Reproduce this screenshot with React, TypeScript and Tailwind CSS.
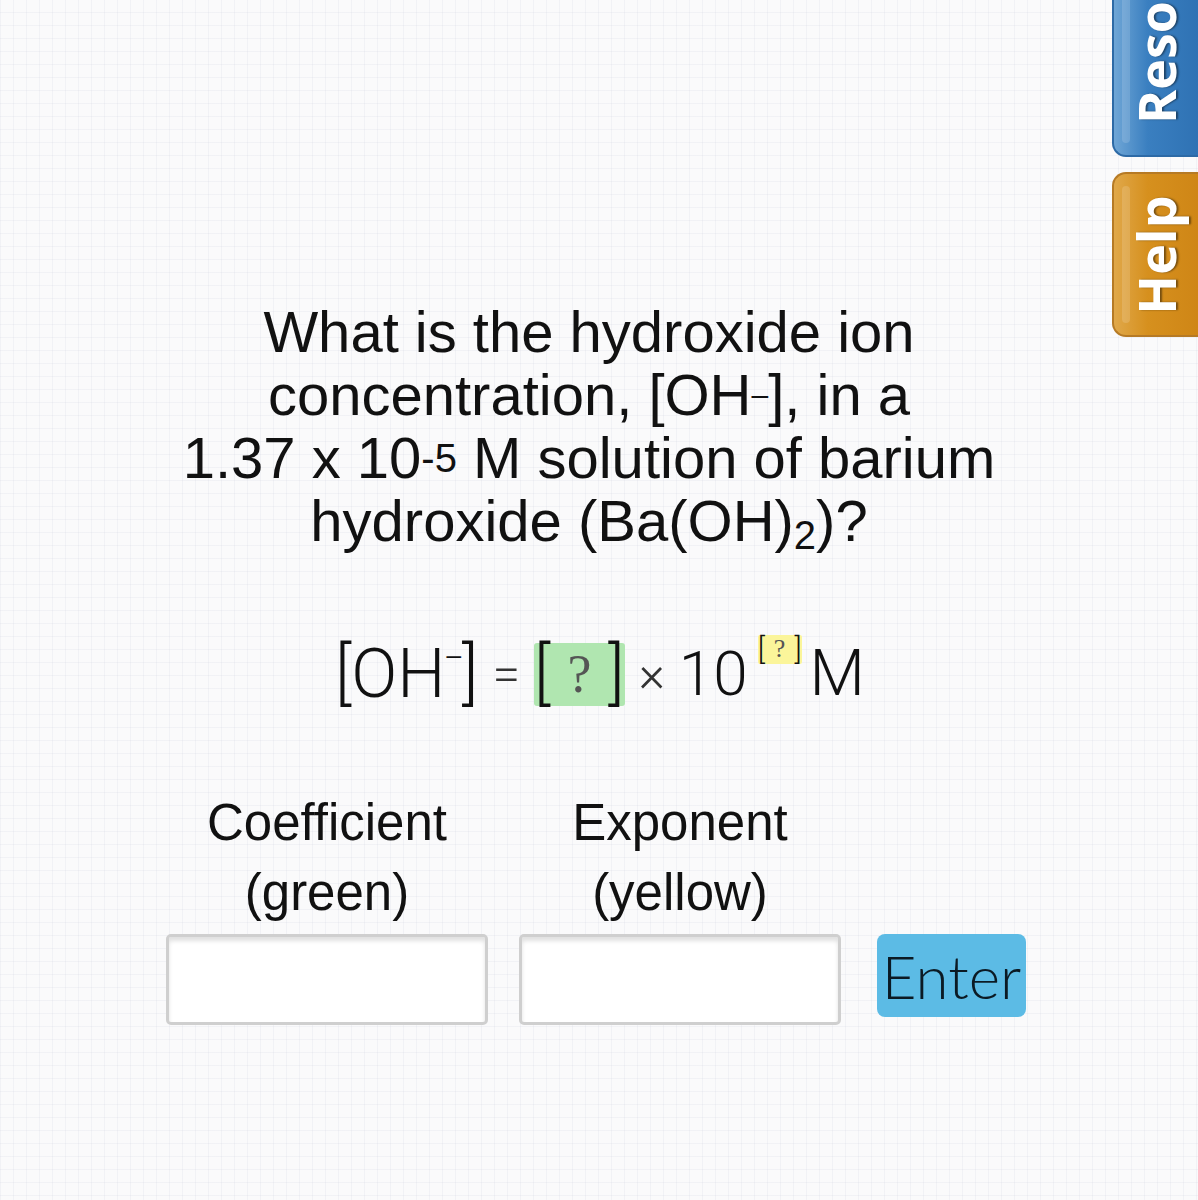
import React from 'react';

const sans = "font-['Liberation_Sans',Arial,sans-serif]";
const mathFont = "font-['Roboto',sans-serif] font-light";

function SideTab({ label, tone }: { label: string; tone: 'blue' | 'orange' }) {
  const colors =
    tone === 'blue'
      ? 'bg-[linear-gradient(90deg,#6fa6d6_0%,#3a7fc0_40%,#2f72b4_100%)] border-[#2d6aa6]'
      : 'bg-[linear-gradient(90deg,#e0a84a_0%,#d6901e_40%,#cf8616_100%)] border-[#b67a25]';
  return (
    <div className={`relative flex h-full w-full items-center justify-center overflow-hidden rounded-l-[14px] border-2 border-r-0 ${colors}`}>
      <span className="absolute inset-y-3 left-2 w-2 rounded-full bg-white/15" />
      <span className="-rotate-90 whitespace-nowrap font-['Open_Sans',sans-serif] text-[52px] font-bold text-white [text-shadow:0_2px_2px_rgba(0,0,0,0.45)]">
        {label}
      </span>
    </div>
  );
}

export default function App() {
  return (
    <div className="relative h-[1200px] w-full overflow-hidden bg-[#fafafb] bg-[linear-gradient(90deg,rgba(200,205,220,0.18)_1px,transparent_1px),linear-gradient(0deg,rgba(200,205,220,0.18)_1px,transparent_1px)] bg-[size:13px_13px]">
      {/* right-hand tabs */}
      <div className="absolute right-0 top-[-173px] h-[330px] w-[86px]">
        <SideTab label="Resources" tone="blue" />
      </div>
      <div className="absolute right-0 top-[172px] h-[165px] w-[86px]">
        <SideTab label="Help" tone="orange" />
      </div>

      <div className="ml-[166px] flex w-[860px] flex-col items-center pt-[300px]">
        <p className={`${sans} w-[860px] -ml-[14px] text-center text-[58px] leading-[63px] text-[#111]`}>
          What is the hydroxide ion
          <br />
          concentration, [OH<sup className="relative top-[-10px] text-[30px] leading-none">–</sup>], in a
          <br />
          1.37 x 10<sup className="relative top-[-6px] align-baseline text-[40px] leading-none">-5</sup> M solution of barium
          <br />
          hydroxide (Ba(OH)<sub className="relative top-[8px] align-baseline text-[40px] leading-none">2</sub>)?
        </p>

        {/* equation */}
        <div className={`mt-[88px] ml-[8px] flex items-center ${mathFont} text-[68px] leading-none text-[#111]`}>
          <span>[OH</span>
          <span className="relative top-[-16px] -mx-[2px] text-[36px]">−</span>
          <span>]</span>
          <span className="mx-[14px] text-[50px] text-[#333]">=</span>
          <span className="flex h-[63px] items-center rounded-[3px] bg-[#b0e6b0]">
            <span>[</span>
            <span className="mx-[17px] font-['Liberation_Serif',serif] text-[54px] font-normal text-[#555]">?</span>
            <span>]</span>
          </span>
          <span className="mx-[14px] text-[50px] text-[#333]">×</span>
          <span className="text-[62px]">10</span>
          <span className="relative top-[-25px] ml-[10px] flex h-[29px] items-center rounded-[2px] bg-[#fbf59a] text-[30px]">
            <span>[</span>
            <span className="mx-[9px] font-['Liberation_Serif',serif] text-[26px] font-normal text-[#555]">?</span>
            <span>]</span>
          </span>
          <span className="ml-[8px] text-[64px]">M</span>
        </div>

        {/* answer row */}
        <div className="mt-[80px] flex w-full items-end gap-[31px]">
          <div className="flex w-[322px] flex-col items-center">
            <p className={`${sans} text-center text-[51px] leading-[70px] text-[#111]`}>
              Coefficient
              <br />
              (green)
            </p>
            <input className="mt-[6px] h-[91px] w-full rounded-[5px] border-[3px] border-[#cfcfcf] bg-white shadow-[inset_0_4px_4px_rgba(0,0,0,0.12)] outline-none" />
          </div>
          <div className="flex w-[322px] flex-col items-center">
            <p className={`${sans} text-center text-[51px] leading-[70px] text-[#111]`}>
              Exponent
              <br />
              (yellow)
            </p>
            <input className="mt-[6px] h-[91px] w-full rounded-[5px] border-[3px] border-[#cfcfcf] bg-white shadow-[inset_0_4px_4px_rgba(0,0,0,0.12)] outline-none" />
          </div>
          <button
            type="button"
            className="mb-[8px] ml-[5px] flex h-[83px] w-[149px] items-center justify-center rounded-[8px] bg-[#5cbbe5] font-['Lato',sans-serif] text-[60px] font-light text-[#0b1a24]"
          >
            Enter
          </button>
        </div>
      </div>
    </div>
  );
}
